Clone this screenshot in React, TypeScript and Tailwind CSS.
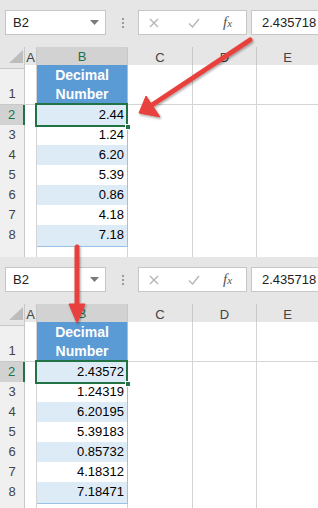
import React from "react";

const FONT = "font-['Liberation_Sans',Arial,sans-serif]";

function Toolbar() {
  return (
    <div className="flex h-[47px] items-start bg-[#e6e6e6] pt-[10px]">
      <div className="ml-[5px] flex h-[25px] w-[101px] items-center justify-between border border-[#c6c6c6] bg-white pl-[7px] pr-[6px] text-[13px] text-[#222]">
        <span>B2</span>
        <svg width="9" height="5" viewBox="0 0 9 5">
          <path d="M0 0 L9 0 L4.5 5 Z" fill="#7a7a7a" />
        </svg>
      </div>
      <div className="ml-[14px] flex h-[25px] w-[5px] flex-col items-center justify-center gap-[2px]">
        <div className="h-[2px] w-[2px] bg-[#9a9a9a]" />
        <div className="h-[2px] w-[2px] bg-[#9a9a9a]" />
        <div className="h-[2px] w-[2px] bg-[#9a9a9a]" />
      </div>
      <div className="ml-[13px] flex h-[25px] w-[109px] items-center border border-[#c6c6c6] bg-white">
        <svg className="ml-[10px]" width="10" height="10" viewBox="0 0 10 10">
          <path d="M1 1 L9 9 M9 1 L1 9" stroke="#b4b4b4" strokeWidth="1.3" />
        </svg>
        <svg className="ml-[29px]" width="12" height="10" viewBox="0 0 12 10">
          <path d="M1 5.5 L4.5 9 L11 1" stroke="#b4b4b4" strokeWidth="1.3" fill="none" />
        </svg>
        <span className="ml-[23px] font-['Liberation_Serif',serif] text-[15px] italic text-[#555]">
          f<span className="text-[11px]">x</span>
        </span>
      </div>
      <div className="ml-[4px] flex h-[25px] flex-1 items-center border border-r-0 border-[#c6c6c6] bg-white pl-[10px] text-[13px] text-[#222]">
        2.435718
      </div>
    </div>
  );
}

function HeaderRow() {
  return (
    <div className="grid h-[18px] grid-cols-[25px_12px_91px_65px_64px_1fr] text-[13px] text-[#444]">
      <div className="relative border-r border-b border-[#c8c8c8] bg-[#e6e6e6]">
        <svg className="absolute left-[9px] top-[3px]" width="14" height="13" viewBox="0 0 14 13">
          <path d="M14 0 L14 13 L0 13 Z" fill="#bdbdbd" />
        </svg>
      </div>
      <div className="flex items-center justify-center border-r border-b border-[#c8c8c8] bg-[#e6e6e6]">A</div>
      <div className="flex items-center justify-center border-r border-b-2 border-r-[#c8c8c8] border-b-[#217346] bg-[#d2d2d2] text-[#217346]">B</div>
      <div className="flex items-center justify-center border-r border-b border-[#c8c8c8] bg-[#e6e6e6]">C</div>
      <div className="flex items-center justify-center border-r border-b border-[#c8c8c8] bg-[#e6e6e6]">D</div>
      <div className="flex items-center justify-center border-b border-[#c8c8c8] bg-[#e6e6e6]">E</div>
    </div>
  );
}

function DataRow({ n, value }: { n: number; value: string }) {
  const selected = n === 2;
  const even = n % 2 === 0;
  return (
    <div className="grid h-[20px] grid-cols-[25px_12px_91px_65px_64px_1fr] text-[13px]">
      {selected ? (
        <div className="flex items-end justify-center border-r-2 border-b border-r-[#217346] border-b-[#c8c8c8] bg-[#d2d2d2] pb-[1px] text-[#217346]">
          {n}
        </div>
      ) : (
        <div className="flex items-end justify-center border-r border-b border-[#c8c8c8] bg-[#f0f0f0] pb-[1px] text-[#444]">
          {n}
        </div>
      )}
      <div className="border-r border-b border-[#d4d4d4] bg-white" />
      <div
        className={`relative flex items-end justify-end border-r border-b border-[#9bc2e6] pb-[1px] pr-[3px] text-black ${
          even ? "bg-[#ddebf7]" : "bg-white"
        }`}
      >
        {value}
        {selected && (
          <>
            <div className="pointer-events-none absolute left-[-2px] top-[-2px] right-[-1px] bottom-[-1px] z-10 border-2 border-solid border-[#217346]" />
            <div className="absolute bottom-[-4px] right-[-4px] z-20 h-[6px] w-[6px] border border-white bg-[#217346]" />
          </>
        )}
      </div>
      <div className="border-r border-b border-[#d4d4d4] bg-white" />
      <div className="border-r border-b border-[#d4d4d4] bg-white" />
      <div className="border-b border-[#d4d4d4] bg-white" />
    </div>
  );
}

function Sheet({ values, height }: { values: string[]; height: string }) {
  return (
    <div className={`relative ${height} overflow-hidden bg-white`}>
      <Toolbar />
      <HeaderRow />
      <div className="grid h-[40px] grid-cols-[25px_12px_91px_65px_64px_1fr] text-[13px]">
        <div className="flex items-end justify-center border-r border-b border-[#c8c8c8] bg-[#f0f0f0] pb-[1px] text-[#444]">1</div>
        <div className="border-r border-b border-[#d4d4d4] bg-white" />
        <div className="flex flex-col items-center justify-center border-r border-b border-[#9bc2e6] bg-[#5b9bd5] text-[14px] font-bold leading-[19px] text-white">
          <span>Decimal</span>
          <span>Number</span>
        </div>
        <div className="border-r border-b border-[#d4d4d4] bg-white" />
        <div className="border-r border-b border-[#d4d4d4] bg-white" />
        <div className="border-b border-[#d4d4d4] bg-white" />
      </div>
      {values.map((v, i) => (
        <DataRow key={i} n={i + 2} value={v} />
      ))}
      <div className="grid h-[20px] grid-cols-[25px_12px_91px_65px_64px_1fr]">
        <div className="border-r border-[#c8c8c8] bg-[#f0f0f0]" />
        <div className="border-r border-[#d4d4d4] bg-white" />
        <div className="border-r border-[#d4d4d4] bg-white" />
        <div className="border-r border-[#d4d4d4] bg-white" />
        <div className="border-r border-[#d4d4d4] bg-white" />
        <div className="bg-white" />
      </div>
    </div>
  );
}

export default function App() {
  const rows1 = ["2.44", "1.24", "6.20", "5.39", "0.86", "4.18", "7.18"];
  const rows2 = ["2.43572", "1.24319", "6.20195", "5.39183", "0.85732", "4.18312", "7.18471"];
  return (
    <div className={`relative h-[508px] w-[318px] overflow-hidden bg-white ${FONT}`}>
      <Sheet values={rows1} height="h-[257px]" />
      <Sheet values={rows2} height="h-[251px]" />
      <svg className="pointer-events-none absolute left-0 top-0 z-30" width="318" height="508" viewBox="0 0 318 508">
        <defs>
          <filter id="sh" x="-20%" y="-20%" width="140%" height="140%">
            <feDropShadow dx="1" dy="1.5" stdDeviation="1.2" floodColor="#000" floodOpacity="0.35" />
          </filter>
        </defs>
        <g filter="url(#sh)" fill="#e8403d" stroke="#e8403d">
          <line x1="250" y1="40" x2="152" y2="105" strokeWidth="5" strokeLinecap="round" />
          <path d="M139 113 L146 96 L160 117 Z" strokeWidth="1" strokeLinejoin="round" />
          <line x1="77" y1="247" x2="77" y2="306" strokeWidth="5" strokeLinecap="round" />
          <path d="M69 304 L85 304 L77 323 Z" strokeWidth="1" strokeLinejoin="round" />
        </g>
      </svg>
    </div>
  );
}
